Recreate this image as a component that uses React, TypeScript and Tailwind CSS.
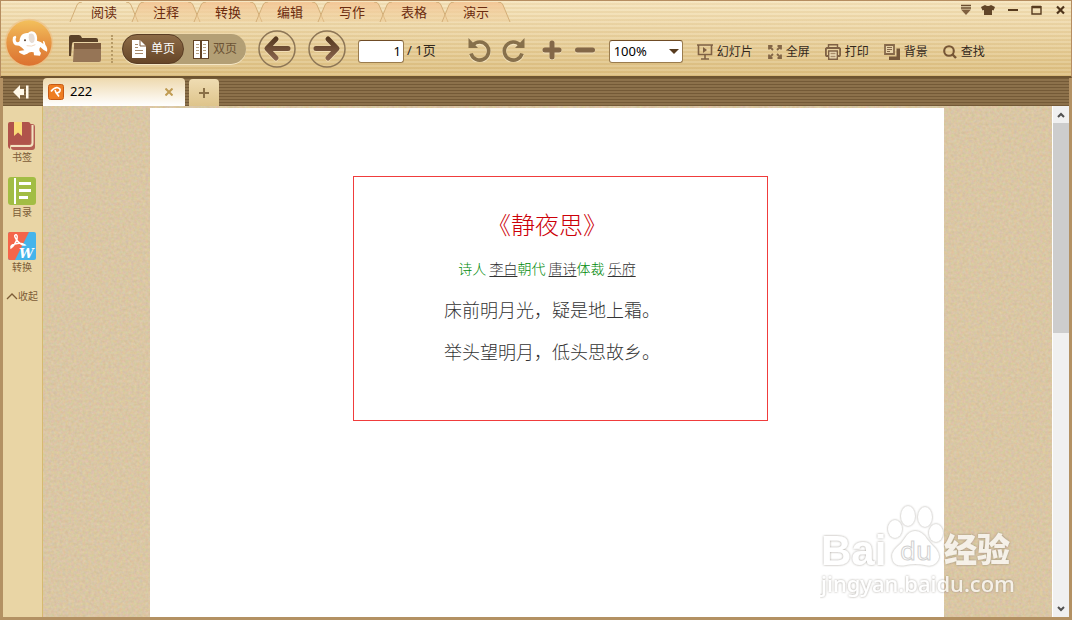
import { useState, type ReactNode } from "react";

const menuTabs = ["阅读", "注释", "转换", "编辑", "写作", "表格", "演示"];

const Logo = () => (
  <svg viewBox="0 0 150 150" className="size-[50px]" aria-hidden="true">
    <defs>
      <linearGradient id="logoFill" x1="0" y1="0" x2="0" y2="1">
        <stop offset="0" stopColor="#f3c05c" />
        <stop offset="0.5" stopColor="#e69443" />
        <stop offset="1" stopColor="#dc7230" />
      </linearGradient>
    </defs>
    <circle cx="75" cy="75" r="73" fill="#efb97a" opacity="0.5" />
    <circle cx="75" cy="75" r="68" fill="url(#logoFill)" />
    <path
      d="M27 57 L34 53 L37 57 Q33 62 36 70 Q41 76 47 69 Q47 52 59 47 Q66 44 72 45 Q80 36 91 42 Q101 49 99 68 Q112 70 118 78 L117 69 Q120 68 122 72 L124 80 Q132 90 129 101 L119 96 L109 87 Q102 97 111 105 L108 113 L90 112 L89 103 Q76 100 70 107 L60 111 L46 104 L45 99 L61 97 L54 89 Q47 82 34 82 Q23 75 27 57Z"
      fill="#fff"
    />
    <path d="M75 48 Q90 43 92 60 Q93 76 82 75 Q74 71 74 58Z" fill="#e6ddd6" />
    <circle cx="63" cy="67" r="3" fill="#5b4333" />
    <path d="M68 83 Q84 87 94 80" fill="none" stroke="#ecc49f" strokeWidth="2" />
  </svg>
);

const FolderIcon = () => (
  <svg viewBox="0 0 33 28" className="w-[33px] h-7" aria-hidden="true">
    <path d="M0 21 V2 Q0 0 2 0 H10 Q12 0 13 3 H27 Q29 3 29 5 V7 H5 Q3 7 3 9 L2 21Z" fill="#5a4128" />
    <path d="M5 8 H31 Q32 8 32 10 V25 Q32 27 30 27 H4 L5 10Z" fill="#967556" />
    <path d="M5 8 H32 V14 H5Z" fill="#7b5a3d" />
  </svg>
);

const SinglePageIcon = () => (
  <svg viewBox="0 0 15 18" className="w-[15px] h-[18px]" aria-hidden="true">
    <path d="M0 0 H8 L14 6 V18 H0Z" fill="#fff" />
    <path d="M8 0 V6 H14" fill="none" stroke="#805d3e" />
    <path d="M3 4.5 H6 M3 7.5 H6 M3 10.5 H11 M3 13.5 H11" stroke="#a78a6c" />
  </svg>
);

const DoublePageIcon = () => (
  <svg viewBox="0 0 16 19" className="w-4 h-[19px]" aria-hidden="true">
    <path d="M0 0 H16 V19 H0Z" fill="#624326" />
    <path d="M1 1 H7 V18 H1Z M9 1 H15 V18 H9Z" fill="#fff" />
    <path d="M3 4.5 H6 M3 7.5 H6 M3 10.5 H6 M3 13.5 H6 M10 4.5 H13 M10 7.5 H13 M10 10.5 H13 M10 13.5 H13" stroke="#b5a084" />
  </svg>
);

const CircleArrow = ({ next }: { next?: boolean }) => (
  <svg viewBox="0 0 38 38" className="size-[38px]" aria-hidden="true">
    <defs>
      <linearGradient id="arrowInk" gradientUnits="userSpaceOnUse" x1="0" y1="7" x2="0" y2="31">
        <stop offset="0" stopColor="#54381f" />
        <stop offset="1" stopColor="#8d6750" />
      </linearGradient>
    </defs>
    <circle cx="19" cy="19" r="18" fill="none" stroke="#8d7656" strokeWidth="1.5" />
    <path
      d={next ? "M8 18.5 H28 M20 9 L29 18.5 L20 28" : "M30 18.5 H10 M18 9 L9 18.5 L18 28"}
      fill="none"
      stroke="#f3dfb6"
      strokeWidth="5"
      strokeLinecap="round"
      strokeLinejoin="round"
      transform="translate(0 1)"
    />
    <path
      d={next ? "M8 18.5 H28 M20 9 L29 18.5 L20 28" : "M30 18.5 H10 M18 9 L9 18.5 L18 28"}
      fill="none"
      stroke="url(#arrowInk)"
      strokeWidth="5"
      strokeLinecap="round"
      strokeLinejoin="round"
    />
  </svg>
);

const RotateIcon = ({ right }: { right?: boolean }) => (
  <svg viewBox="0 0 24 24" className={right ? "size-6 -scale-x-100" : "size-6"} aria-hidden="true">
    <g transform="translate(0 1)" fill="none" stroke="#f4e3bd" strokeWidth="4">
      <path d="M5 7 A9 9 0 1 1 3 15.5" />
    </g>
    <path d="M5 7 A9 9 0 1 1 3 15.5" fill="none" stroke="#87704b" strokeWidth="3.6" />
    <path d="M0.5 0 V10 H10Z" fill="#87704b" />
  </svg>
);

const ZoomIcon = ({ plus }: { plus?: boolean }) => (
  <svg viewBox="0 0 20 20" className="size-5" aria-hidden="true">
    <path d={plus ? "M3 11 H17 M10 4 V18" : "M2.5 11 H17.5"} stroke="#f4e3bd" strokeWidth="5" strokeLinecap="round" />
    <path d={plus ? "M3 10 H17 M10 3 V17" : "M2.5 10 H17.5"} stroke="#836748" strokeWidth="5" strokeLinecap="round" />
  </svg>
);

const SlideIcon = () => (
  <svg viewBox="0 0 16 16" className="size-4" aria-hidden="true">
    <path d="M0 1 H16 M1.5 1 V10.5 H14.5 V1 M8 10.5 V15 M4 15 H12" fill="none" stroke="#7f6144" strokeWidth="1.6" />
    <path d="M6 3 L10 6 L6 9Z" fill="#7f6144" />
  </svg>
);

const FullScreenIcon = () => (
  <svg viewBox="0 0 14 14" className="size-3.5" aria-hidden="true">
    <path
      d="M1 4.5 V1 H4.5 M1 1 L5 5 M9.5 1 H13 V4.5 M13 1 L9 5 M1 9.5 V13 H4.5 M1 13 L5 9 M13 9.5 V13 H9.5 M13 13 L9 9"
      fill="none"
      stroke="#836647"
      strokeWidth="1.8"
    />
  </svg>
);

const PrintIcon = () => (
  <svg viewBox="0 0 16 16" className="size-4" fill="none" stroke="#7f6144" strokeWidth="1.4" aria-hidden="true">
    <path d="M3.5 4 V0.8 H12.5 V4" />
    <path d="M3.5 12 H1.5 L0.8 11 V5 L2 4 H14 L15.2 5 V11 L14.5 12 H12.5" strokeWidth="2" />
    <path d="M3.7 7 H12.3 V15.2 H3.7Z" fill="#f0dfba" />
    <path d="M5.5 9.5 H10.5 M5.5 12.5 H10.5" stroke="#a98d6b" />
  </svg>
);

const BackgroundIcon = () => (
  <svg viewBox="0 0 16 16" className="size-4" aria-hidden="true">
    <path d="M12.5 4.5 H16 V16 H5 V12.5 H12.5Z" fill="#76583a" />
    <path d="M1 1 H10 V10 H1Z" fill="#e8d3a8" stroke="#86694a" strokeWidth="1.8" />
    <path d="M3 3.5 H8 M3 5.5 H8 M3 7.5 H6" stroke="#86694a" />
  </svg>
);

const SearchIcon = () => (
  <svg viewBox="0 0 14 14" className="size-3.5" fill="none" stroke="#765636" aria-hidden="true">
    <circle cx="6" cy="6" r="4.8" strokeWidth="2.1" />
    <path d="M9.5 9.5 L13 13" strokeWidth="2.4" />
  </svg>
);

const tools: { label: string; icon: ReactNode }[] = [
  { label: "幻灯片", icon: <SlideIcon /> },
  { label: "全屏", icon: <FullScreenIcon /> },
  { label: "打印", icon: <PrintIcon /> },
  { label: "背景", icon: <BackgroundIcon /> },
  { label: "查找", icon: <SearchIcon /> },
];

const windowButtons: { label: string; icon: ReactNode }[] = [
  {
    label: "菜单",
    icon: (
      <>
        <path d="M4 2.5 H14 M4 5 H14" stroke="#6a4e31" strokeWidth="1.6" />
        <path d="M4 6.5 H14 L9 12Z" fill="#80603f" />
      </>
    ),
  },
  {
    label: "皮肤",
    icon: <path d="M4 2 Q7 4 10 2 L14 4 L12.5 7.5 L11 7 V12 H3 V7 L1.5 7.5 L0 4Z" fill="#614528" />,
  },
  { label: "最小化", icon: <path d="M3 7 H13" stroke="#573b1f" strokeWidth="2" /> },
  {
    label: "最大化",
    icon: <path d="M3 3.5 H12 M3 4.5 H12 M3 3 V11 H12 V3" fill="none" stroke="#573b1f" strokeWidth="1.4" />,
  },
  { label: "关闭", icon: <path d="M4 3.5 L11 10.5 M11 3.5 L4 10.5" stroke="#4e341b" strokeWidth="2.2" /> },
];

const sideItems: { label: string; icon: ReactNode }[] = [
  {
    label: "书签",
    icon: (
      <>
        <rect x="3" y="2" width="24" height="26" rx="3" fill="#b55f54" />
        <path d="M24.5 3 V21 Q24.5 24 21.5 24 H3" fill="none" stroke="#f3e3c2" strokeWidth="2" />
        <path d="M2 0 H20 Q22.5 0 22.5 2.5 V20 Q22.5 22 20 22 H5 Q2 22 2 25 V27 Q0 26 0 24 V2 Q0 0 2 0Z" fill="#b0534b" />
        <path d="M6 0 H14 V14 L10 10.5 L6 14Z" fill="#f9d978" />
      </>
    ),
  },
  {
    label: "目录",
    icon: (
      <>
        <rect width="28" height="28" rx="3" fill="#a2bd44" />
        <path d="M7 1 V27" stroke="#fff" strokeWidth="2" />
        <path d="M11 6.5 H23 M11 13.5 H23 M11 20.5 H20" stroke="#fff" strokeWidth="3" />
      </>
    ),
  },
  {
    label: "转换",
    icon: (
      <>
        <rect width="28" height="28" rx="2" fill="#45b4ea" />
        <path d="M2 0 H21 L7 28 H2 Q0 28 0 26 V2 Q0 0 2 0Z" fill="#f4654a" />
        <path
          d="M7 3 Q10 2 9 7 Q7 13 3 16 Q2 13 7 12 Q13 10 17 13 Q13 14 8 7 Q6 4 7 3"
          fill="none"
          stroke="#fff"
          strokeWidth="1.4"
        />
        <text x="11" y="26" className="font-['DejaVu_Serif',serif] text-[13px] font-bold italic" fill="#fff">
          W
        </text>
      </>
    ),
  },
];

const MenuTab = ({ label, active, onClick }: { label: string; active: boolean; onClick: () => void }) => (
  <button onClick={onClick} className="relative -mr-2 h-5 w-[70px] shrink-0 text-[13px] leading-5 text-[#6b2b0e]">
    <svg viewBox="0 0 70 20" className="absolute inset-0 h-5 w-[70px]" aria-hidden="true">
      <defs>
        <linearGradient id="tabFill" x1="0" y1="0" x2="0" y2="1">
          <stop offset="0" stopColor="#f3c493" stopOpacity="0.9" />
          <stop offset="1" stopColor="#efcf9b" stopOpacity="0.3" />
        </linearGradient>
      </defs>
      <path d="M1 20 L8 3 Q9 0 13 0 H57 Q61 0 62 3 L69 20" fill={active ? "none" : "url(#tabFill)"} />
      <path d="M1 20 L8 3 Q9 0 13 0 M57 0 Q61 0 62 3 L69 20" fill="none" stroke="#d3ae78" />
    </svg>
    <span className="relative">{label}</span>
  </button>
);

const Header = () => {
  const [tab, setTab] = useState("阅读");
  const [mode, setMode] = useState("single");

  return (
    <header className="flex border border-b-2 border-[#b58d60] border-b-[#6d5330] bg-[repeating-linear-gradient(to_bottom,#fff3d22b_0_2px,#c79f4d1c_2px_4px),linear-gradient(to_bottom,#f5e4bf,#dbbd80)]">
      <div className="flex w-[68px] shrink-0 items-center pt-2 pl-[3px]">
        <Logo />
      </div>
      <div className="min-w-0 flex-1">
        <div className="flex items-start justify-between">
          <nav className="flex pt-px">
            {menuTabs.map((label) => (
              <MenuTab key={label} label={label} active={tab === label} onClick={() => setTab(label)} />
            ))}
          </nav>
          <div className="-mr-px flex">
            {windowButtons.map(({ label, icon }) => (
              <button key={label} aria-label={label} className="flex h-[18px] w-6 items-center justify-center">
                <svg viewBox="0 0 14 14" className="size-3.5" aria-hidden="true">
                  {icon}
                </svg>
              </button>
            ))}
          </div>
        </div>

        <div className="flex h-[54px] items-center text-xs whitespace-nowrap text-[#33281c]">
          <button aria-label="打开" className="shrink-0">
            <FolderIcon />
          </button>
          <div className="mx-[9px] h-7 shrink-0 border-l-2 border-dotted border-[#b69a66]" />
          <div className="flex h-[30px] shrink-0 rounded-full bg-[#b39f75] shadow-[0_1px_0_#f5e6c4]">
            <button
              onClick={() => setMode("single")}
              aria-pressed={mode === "single"}
              className="flex w-[62px] items-center gap-1 rounded-full border border-[#5a3d24] bg-linear-to-b from-[#8d6b47] to-[#664628] pl-[9px] text-white"
            >
              <SinglePageIcon />
              单页
            </button>
            <button
              onClick={() => setMode("double")}
              aria-pressed={mode === "double"}
              className="flex w-[62px] items-center gap-1 pl-[9px] text-[#6b5234]"
            >
              <DoublePageIcon />
              双页
            </button>
          </div>
          <button aria-label="上一页" className="ml-3 shrink-0">
            <CircleArrow />
          </button>
          <button aria-label="下一页" className="ml-3 shrink-0">
            <CircleArrow next />
          </button>
          <label className="mt-1 ml-3 flex shrink-0 items-center gap-[3px] text-[13px]">
            <input
              aria-label="页码"
              defaultValue="1"
              className="h-[23px] w-[46px] rounded-[3px] border border-[#9a7c4f] border-t-[#6f4c26] bg-white px-0.5 text-right text-black"
            />
            / 1页
          </label>
          <button aria-label="向左旋转" className="mt-0.5 ml-8 shrink-0">
            <RotateIcon />
          </button>
          <button aria-label="向右旋转" className="mt-0.5 ml-[9px] shrink-0">
            <RotateIcon right />
          </button>
          <button aria-label="放大" className="mt-0.5 ml-[17px] shrink-0">
            <ZoomIcon plus />
          </button>
          <button aria-label="缩小" className="mt-0.5 ml-[13px] shrink-0">
            <ZoomIcon />
          </button>
          <div className="relative mt-1 ml-[14px] shrink-0">
            <select
              aria-label="缩放比例"
              defaultValue="100%"
              className="h-[23px] w-[74px] appearance-none rounded-[3px] border border-[#9a7c4f] border-t-[#6f4c26] bg-white pl-1 text-[13px] leading-5 text-black"
            >
              <option>50%</option>
              <option>100%</option>
              <option>200%</option>
            </select>
            <svg viewBox="0 0 10 5" className="pointer-events-none absolute top-[9px] right-1 h-[5px] w-[10px]" aria-hidden="true">
              <path d="M0 0 H10 L5 5Z" fill="#573b1f" />
            </svg>
          </div>
          <div className="mt-[5px] ml-[14px] flex gap-[15px]">
            {tools.map(({ label, icon }) => (
              <button key={label} className="flex items-center gap-1">
                {icon}
                {label}
              </button>
            ))}
          </div>
        </div>
      </div>
    </header>
  );
};

const FileTabs = () => (
  <div className="flex h-7 shrink-0 items-end bg-[repeating-linear-gradient(to_bottom,#745a37_0_1px,#8c714b_1px_3px)]">
    <button aria-label="收起侧栏" className="flex h-7 w-10 items-center justify-center pr-1">
      <svg viewBox="0 0 16 14" className="h-3.5 w-4" aria-hidden="true">
        <path d="M0 7 L7 0 V4 H11 V10 H7 V14Z M13 0.5 H15.5 V13.5 H13Z" fill="#fff8e8" />
      </svg>
    </button>
    <div className="flex h-7 w-[142px] items-center rounded-t bg-linear-to-b from-[#eed9ae] to-white pr-3 pl-[5px]">
      <svg viewBox="0 0 16 16" className="size-4" aria-hidden="true">
        <rect x="0.5" y="0.5" width="15" height="15" rx="2" fill="#ee7d22" stroke="#c65a16" />
        <path d="M3 7.5 Q5 4 9 3.5 Q13 4.5 12 7 Q10.5 9.500 8 8.500 M7 6 L8 8.500 L11 12.500" fill="none" stroke="#fff" strokeWidth="1.6" />
      </svg>
      <span className="ml-1.5 text-[13px] text-black">222</span>
      <button aria-label="关闭标签" className="ml-auto">
        <svg viewBox="0 0 8 8" className="size-2" aria-hidden="true">
          <path d="M0.5 0.5 L7.5 7.5 M7.5 0.5 L0.5 7.5" stroke="#c09b52" strokeWidth="2" />
        </svg>
      </button>
    </div>
    <button
      aria-label="新建标签"
      className="ml-1 flex h-[27px] w-[30px] items-center justify-center rounded-t bg-linear-to-b from-[#efdcb2] to-[#dec48b]"
    >
      <svg viewBox="0 0 12 12" className="size-3" aria-hidden="true">
        <path d="M1 6 H11 M6 1 V11" stroke="#8a7047" strokeWidth="2" />
      </svg>
    </button>
  </div>
);

const Sidebar = () => (
  <aside className="flex w-10 shrink-0 flex-col items-center gap-[13px] border-r border-[#d6b970] bg-[#e9d5a5] pt-4 pr-px text-[#7c5c37]">
    {sideItems.map(({ label, icon }) => (
      <button key={label} className="flex flex-col items-center text-[10px] leading-[14px]">
        <svg viewBox="0 0 28 28" className="size-7" aria-hidden="true">
          {icon}
        </svg>
        {label}
      </button>
    ))}
    <button className="flex items-center text-[10px] leading-[18px] whitespace-nowrap">
      <svg viewBox="0 0 12 8" className="h-2 w-3" aria-hidden="true">
        <path d="M1 7 L6 2 L11 7" fill="none" stroke="#7c5c37" strokeWidth="1.3" />
      </svg>
      收起
    </button>
  </aside>
);

const PaperTexture = () => (
  <svg className="absolute inset-0 size-full" aria-hidden="true">
    <filter id="grain" colorInterpolationFilters="sRGB">
      <feTurbulence type="fractalNoise" baseFrequency="0.35" numOctaves="2" seed="4" />
      <feColorMatrix values="0.3 0 0 0 0.71  0 0.3 0 0 0.63  0 0 0.4 0 0.45  0 0 0 0 0.35" />
    </filter>
    <rect width="100%" height="100%" filter="url(#grain)" />
  </svg>
);

const Watermark = () => (
  <svg viewBox="0 0 200 100" className="pointer-events-none absolute right-8 bottom-[15px] h-[100px] w-[200px]" aria-hidden="true">
    <defs>
      <filter id="glow" x="-5%" y="-5%" width="110%" height="110%">
        <feDropShadow dx="0" dy="0" stdDeviation="1" floodColor="#776f63" floodOpacity="0.9" />
      </filter>
    </defs>
    <g filter="url(#glow)" fill="#fff" opacity="0.75">
      <text x="1" y="63" className="font-['Liberation_Sans',sans-serif] text-[42px] font-bold">
        Bai
      </text>
      <ellipse cx="75" cy="27" rx="7" ry="9" />
      <ellipse cx="88" cy="14" rx="7" ry="10" />
      <ellipse cx="105" cy="15" rx="7" ry="10" />
      <ellipse cx="116" cy="31" rx="7" ry="9" />
      <path d="M95 29 Q102 29 107 37 Q111 42 116 47 Q122 55 116 61 Q112 65 105 63 Q95 61 86 63 Q76 65 73 59 Q70 51 77 45 Q82 41 85 36 Q89 29 95 29Z" />
      <text x="124" y="60" className="font-['Noto_Sans_CJK_SC',sans-serif] text-[33px] font-black">
        经验
      </text>
      <text x="1" y="90" className="font-['Noto_Sans',sans-serif] text-[22px] font-medium">
        jingyan.baidu.com
      </text>
    </g>
    <text x="80" y="58" className="font-['Noto_Sans',sans-serif] text-[26px]" fill="#fff" stroke="#d0d0d0" strokeWidth="1">
      du
    </text>
  </svg>
);

const Poem = () => (
  <article className="text-center font-['Noto_Sans_CJK_SC',sans-serif] font-light text-[#333]">
    <h1 className="text-2xl leading-8 text-[#cc0008]">《静夜思》</h1>
    <p className="mt-[18px] text-sm leading-5 text-[#008a0a]">
      诗人{" "}
      <a href="#libai" className="text-[#333] underline underline-offset-2">
        李白
      </a>
      朝代{" "}
      <a href="#tangshi" className="text-[#333] underline underline-offset-2">
        唐诗
      </a>
      体裁{" "}
      <a href="#yuefu" className="text-[#333] underline underline-offset-2">
        乐府
      </a>
    </p>
    <div className="mt-[10px] pl-[10px] text-lg leading-[42px]">
      <p>床前明月光，疑是地上霜。</p>
      <p>举头望明月，低头思故乡。</p>
    </div>
  </article>
);

const ScrollBar = () => (
  <div className="flex w-[17px] shrink-0 flex-col border-l border-white bg-[#f0f0f0]">
    <button aria-label="向上滚动" className="flex h-[17px] items-center justify-center">
      <svg viewBox="0 0 8 6" className="h-1.5 w-2" aria-hidden="true">
        <path d="M1 5 L4 2 L7 5" fill="none" stroke="#505050" strokeWidth="2" />
      </svg>
    </button>
    <div className="flex-1">
      <div className="h-[44%] bg-[#cdcdcd]" />
    </div>
    <button aria-label="向下滚动" className="flex h-[17px] items-center justify-center">
      <svg viewBox="0 0 8 6" className="h-1.5 w-2" aria-hidden="true">
        <path d="M1 1 L4 4 L7 1" fill="none" stroke="#505050" strokeWidth="2" />
      </svg>
    </button>
  </div>
);

const App = () => {
  return (
    <div className="flex h-screen flex-col bg-[#b39163] font-['Noto_Sans','Noto_Sans_CJK_SC',sans-serif]">
      <Header />
      <div className="mx-[3px] mb-[3px] flex min-h-0 flex-1 flex-col">
        <FileTabs />
        <div className="flex min-h-0 flex-1">
          <Sidebar />
          <main className="relative min-w-0 flex-1 overflow-hidden bg-[#d9c6a3] pt-0.5 pr-px">
            <PaperTexture />
            <div className="relative mx-auto h-full max-w-[794px] bg-white pt-[100px]">
              <Poem />
              {/* red annotation rectangle drawn over the page */}
              <div className="absolute top-[68px] left-[203px] h-[245px] w-[415px] border border-[#f03c3c]" />
            </div>
            <Watermark />
          </main>
          <ScrollBar />
        </div>
      </div>
    </div>
  );
};

export default App;
